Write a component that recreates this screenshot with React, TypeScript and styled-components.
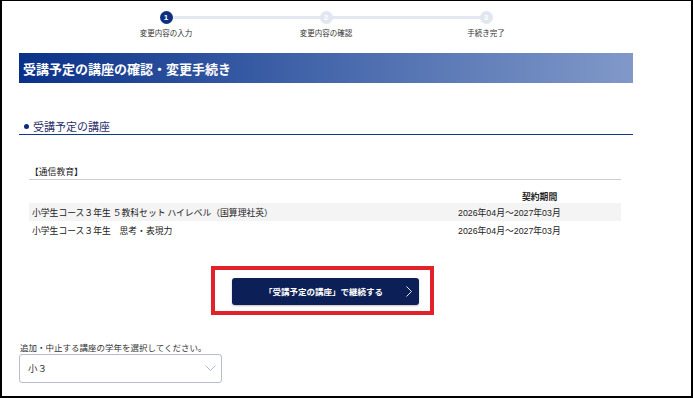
import React from "react";
import styled, { createGlobalStyle } from "styled-components";

const Global = createGlobalStyle`
  html, body { margin: 0; padding: 0; background: #fff; }
  * { box-sizing: border-box; }
  body { font-family: "Noto Sans CJK JP", "Noto Sans", sans-serif; color: #333; }
`;

const Frame = styled.div`
  width: 693px;
  height: 398px;
  border-style: solid;
  border-color: #000;
  border-width: 1px 2px 2px 2px;
  overflow: hidden;
  padding-left: 17px;
`;

const Content = styled.div`
  width: 614px;
  display: flex;
  flex-direction: column;
`;

const Stepper = styled.div`
  display: flex;
  justify-content: center;
  padding-top: 10px;
`;

const Step = styled.div<{ $first?: boolean; $last?: boolean }>`
  width: 160px;
  display: flex;
  flex-direction: column;
  align-items: center;
  position: relative;
  &::before {
    content: "";
    position: absolute;
    top: 5px;
    height: 3px;
    background: #e4e8f2;
    left: ${(p) => (p.$first ? "50%" : "0")};
    right: ${(p) => (p.$last ? "50%" : "0")};
  }
`;

const Dot = styled.div<{ $active?: boolean }>`
  position: relative;
  width: 13px;
  height: 13px;
  border-radius: 50%;
  background: ${(p) => (p.$active ? "#0e2f80" : "#e2e6f1")};
  color: #fff;
  font-size: 8px;
  font-weight: 700;
  line-height: 13px;
  text-align: center;
  font-family: "Liberation Sans", sans-serif;
`;

const StepLabel = styled.div`
  margin-top: 4px;
  font-size: 7.5px;
  line-height: 10px;
  color: #333;
  white-space: nowrap;
`;

const TitleBar = styled.h1`
  margin: 15px 0 0;
  height: 30px;
  padding-left: 4px;
  display: flex;
  align-items: center;
  background: linear-gradient(90deg, #0a3189 0%, #3f62a8 45%, #8199c9 100%);
  color: #fff;
  font-size: 13px;
  font-weight: 700;
`;

const SectionHead = styled.h2`
  margin: 35px 0 0;
  padding: 0 0 0 5px;
  height: 17px;
  border-bottom: 1.5px solid #0b3a8f;
  display: flex;
  align-items: center;
  gap: 4px;
  font-size: 11px;
  line-height: 16px;
  font-weight: 400;
  color: #2a2f6a;
`;

const Bullet = styled.span`
  width: 5px;
  height: 5px;
  border-radius: 50%;
  background: #0b2a80;
`;

const Table = styled.div`
  margin: 31px 12px 0 10px;
  display: flex;
  flex-direction: column;
  font-size: 8.8px;
  color: #222;
`;

const Category = styled.div`
  line-height: 12px;
  padding: 0 0 1px 1px;
  border-bottom: 1px solid #cccccc;
`;

const Row = styled.div<{ $shade?: boolean; $head?: boolean }>`
  display: grid;
  grid-template-columns: 429px 1fr;
  align-items: center;
  height: ${(p) => (p.$head ? "14px" : "18px")};
  margin-top: ${(p) => (p.$head ? "9px" : "0")};
  background: ${(p) => (p.$shade ? "#f4f4f4" : "transparent")};
  font-weight: ${(p) => (p.$head ? 700 : 400)};
`;

const Cell = styled.div<{ $pad?: number }>`
  padding-left: ${(p) => p.$pad ?? 3}px;
  white-space: nowrap;
`;

const DateCell = styled.div`
  white-space: nowrap;
  font-family: "Liberation Sans", "Noto Sans CJK JP", sans-serif;
  font-size: 8.8px;
`;

const ButtonRow = styled.div`
  margin-top: 27px;
  display: flex;
  justify-content: center;
  padding-right: 7px;
`;

const Highlight = styled.div`
  border: 4px solid #e1222b;
  padding: 6px 11px 6px 17px;
`;

const ContinueButton = styled.button`
  position: relative;
  width: 187px;
  height: 27px;
  border: none;
  border-radius: 3px;
  background: #0c1f56;
  box-shadow: 0 1px 2px rgba(0, 0, 0, 0.25);
  color: #fff;
  font-family: "Noto Sans CJK JP", sans-serif;
  font-size: 8.5px;
  font-weight: 700;
  padding: 0 4px 0 0;
  cursor: pointer;
`;

const Chevron = styled.svg`
  position: absolute;
  right: 7px;
  top: 8px;
`;

const SelectLabel = styled.div`
  margin-top: 26px;
  font-size: 8.5px;
  line-height: 12px;
  color: #333;
  padding-left: 1px;
`;

const Select = styled.div`
  margin-top: 1px;
  width: 203px;
  height: 29px;
  border: 1px solid #b7bdcb;
  border-radius: 3px;
  display: flex;
  align-items: center;
  justify-content: space-between;
  padding: 0 5px 0 8px;
  font-size: 9.5px;
  color: #333;
`;

export default function App() {
  return (
    <>
      <Global />
      <Frame>
        <Content>
          <Stepper>
            <Step $first>
              <Dot $active>1</Dot>
              <StepLabel>変更内容の入力</StepLabel>
            </Step>
            <Step>
              <Dot>2</Dot>
              <StepLabel>変更内容の確認</StepLabel>
            </Step>
            <Step $last>
              <Dot>3</Dot>
              <StepLabel>手続き完了</StepLabel>
            </Step>
          </Stepper>

          <TitleBar>受講予定の講座の確認・変更手続き</TitleBar>

          <SectionHead>
            <Bullet />
            受講予定の講座
          </SectionHead>

          <Table>
            <Category>【通信教育】</Category>
            <Row $head>
              <Cell />
              <Cell $pad={64}>契約期間</Cell>
            </Row>
            <Row $shade>
              <Cell>小学生コース３年生 ５教科セット ハイレベル（国算理社英）</Cell>
              <DateCell>2026年04月～2027年03月</DateCell>
            </Row>
            <Row>
              <Cell>小学生コース３年生　思考・表現力</Cell>
              <DateCell>2026年04月～2027年03月</DateCell>
            </Row>
          </Table>

          <ButtonRow>
            <Highlight>
              <ContinueButton>
                「受講予定の講座」で継続する
                <Chevron width="6" height="11" viewBox="0 0 6 11">
                  <path d="M0.5 0.5 L5.5 5.5 L0.5 10.5" fill="none" stroke="#fff" strokeWidth="0.9" />
                </Chevron>
              </ContinueButton>
            </Highlight>
          </ButtonRow>

          <SelectLabel>追加・中止する講座の学年を選択してください。</SelectLabel>
          <Select>
            <span>小３</span>
            <svg width="11" height="7" viewBox="0 0 11 7">
              <path d="M0.5 0.5 L5.5 5.5 L10.5 0.5" fill="none" stroke="#b0b6c4" strokeWidth="1" />
            </svg>
          </Select>
        </Content>
      </Frame>
    </>
  );
}
